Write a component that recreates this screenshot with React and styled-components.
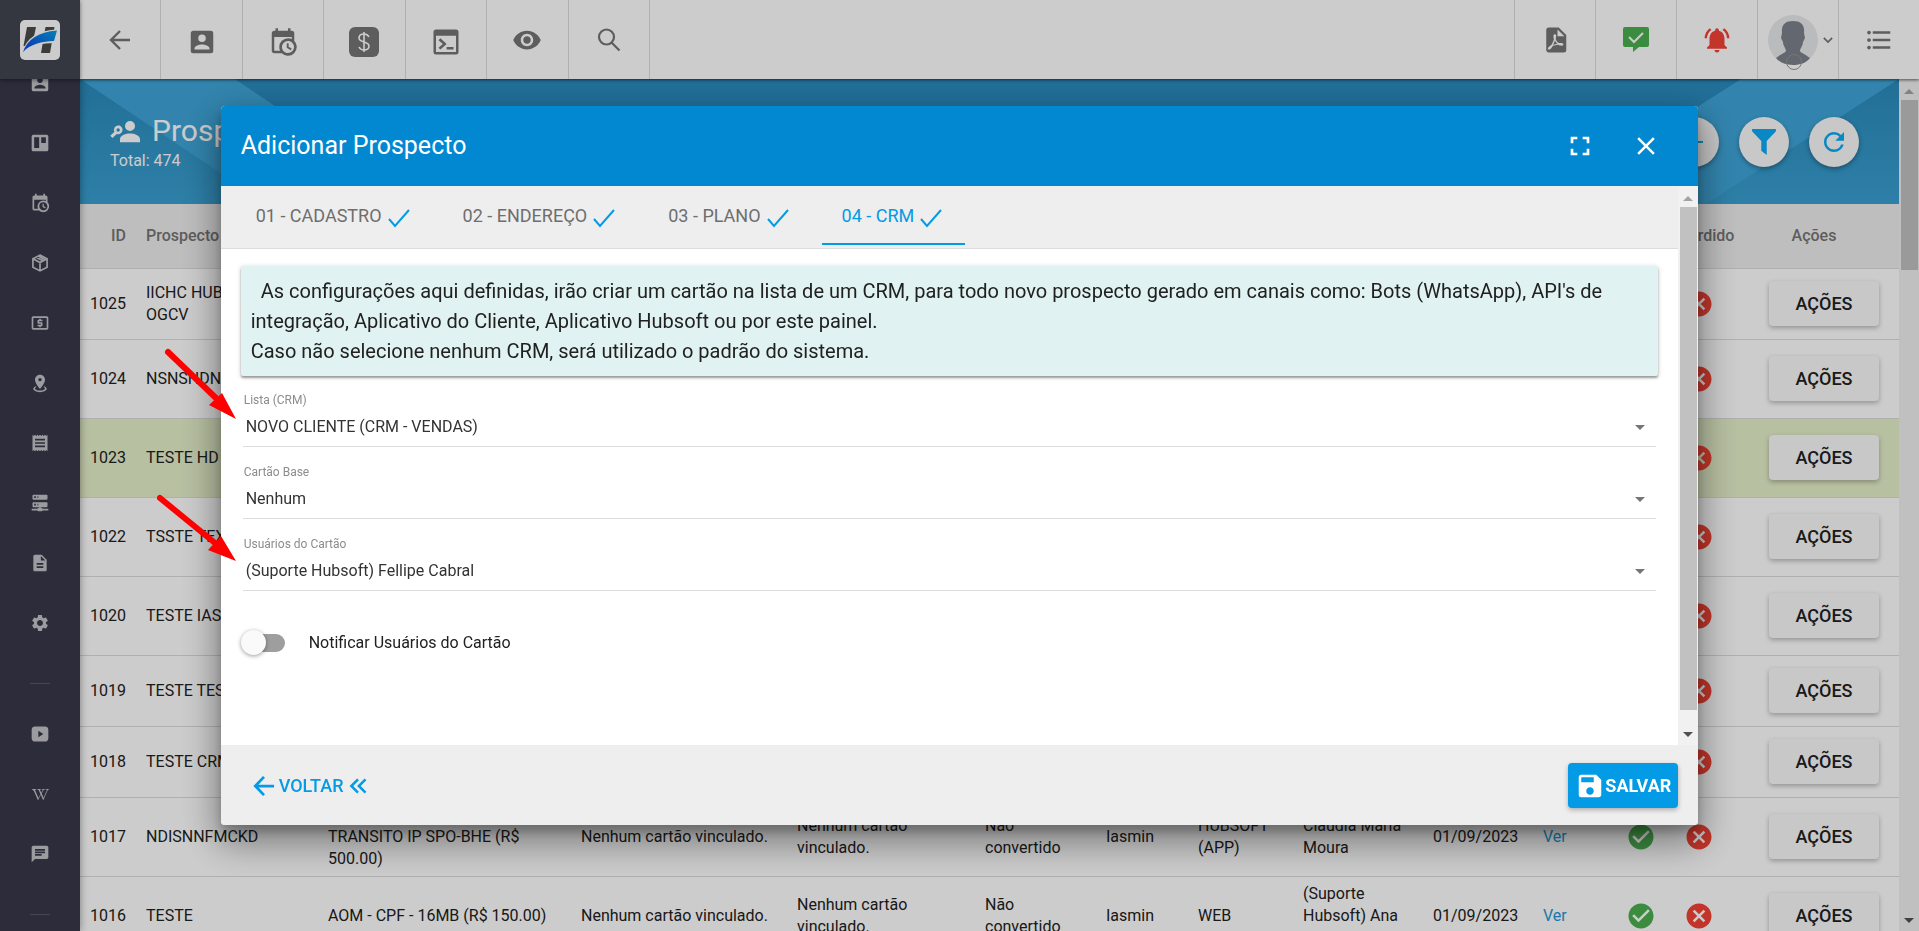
import React from 'react';
import styled, { createGlobalStyle, css } from 'styled-components';
import {
  MdCancel,
  MdChat,
  MdCheckCircle,
  MdClose,
  MdDescription,
  MdFormatListBulleted,
  MdFullscreen,
  MdLocalAtm,
  MdNotificationsActive,
  MdReceipt,
  MdRefresh,
  MdRemoveRedEye,
  MdSave,
  MdSettings,
} from 'react-icons/md';
import { FaWikipediaW } from 'react-icons/fa';

const GlobalStyle = createGlobalStyle`
  *, *::before, *::after {
    box-sizing: border-box;
  }

  body {
    margin: 0;
    overflow: hidden;
    font-family: Roboto, "Liberation Sans", sans-serif;
    font-size: 16px;
    line-height: 22px;
    color: #212121;
    background: #fff;
  }

  button, select, input {
    font: inherit;
    color: inherit;
  }

  button {
    border: 0;
    padding: 0;
    background: none;
    cursor: pointer;
  }

  svg {
    display: block;
    flex: none;
  }
`;

/* ---------- icons ---------- */

const paths = {
  accountBox:
    'M6,17C6,15 10,13.9 12,13.9C14,13.9 18,15 18,17V18H6M15,9A3,3 0 0,1 12,12A3,3 0 0,1 9,9A3,3 0 0,1 12,6A3,3 0 0,1 15,9M3,5V19A2,2 0 0,0 5,21H19A2,2 0 0,0 21,19V5A2,2 0 0,0 19,3H5C3.89,3 3,3.9 3,5Z',
  board:
    'M4,2H20A2,2 0 0,1 22,4V20A2,2 0 0,1 20,22H4A2,2 0 0,1 2,20V4A2,2 0 0,1 4,2M5,5V18H11V5M13.5,5V12H19V5Z',
  calendarClock:
    'M15,13H16.5V15.82L18.94,17.23L18.19,18.53L15,16.69V13M19,8H5V19H9.67C9.24,18.09 9,17.07 9,16A7,7 0 0,1 16,9C17.07,9 18.09,9.24 19,9.67V8M5,21C3.89,21 3,20.1 3,19V5C3,3.89 3.89,3 5,3H6V1H8V3H16V1H18V3H19A2,2 0 0,1 21,5V11.1C22.24,12.36 23,14.09 23,16A7,7 0 0,1 16,23C14.09,23 12.36,22.24 11.1,21H5M16,11.15A4.85,4.85 0 0,0 11.15,16C11.15,18.68 13.32,20.85 16,20.85A4.85,4.85 0 0,0 20.85,16C20.85,13.32 18.68,11.15 16,11.15Z',
  pin:
    'M12,2C15.31,2 18,4.66 18,7.95C18,12.41 12,19 12,19S6,12.41 6,7.95C6,4.66 8.69,2 12,2M12,6A2,2 0 0,0 10,8A2,2 0 0,0 12,10A2,2 0 0,0 14,8A2,2 0 0,0 12,6M20,19C20,21.21 16.42,23 12,23C7.58,23 4,21.21 4,19C4,17.71 5.22,16.56 7.11,15.83L7.75,16.74C6.67,17.19 6,17.81 6,18.5C6,19.88 8.69,21 12,21C15.31,21 18,19.88 18,18.5C18,17.81 17.33,17.19 16.25,16.74L16.89,15.83C18.78,16.56 20,17.71 20,19Z',
  server:
    'M13,18H14A1,1 0 0,1 15,19H22V21H15A1,1 0 0,1 14,22H10A1,1 0 0,1 9,21H2V19H9A1,1 0 0,1 10,18H11V17H4A1,1 0 0,1 3,16V12A1,1 0 0,1 4,11H20A1,1 0 0,1 21,12V16A1,1 0 0,1 20,17H13V18M4,2H20A1,1 0 0,1 21,3V7A1,1 0 0,1 20,8H4A1,1 0 0,1 3,7V3A1,1 0 0,1 4,2M9,6H10V4H9V6M9,15H10V13H9V15M5,4V6H7V4H5M5,13V15H7V13H5Z',
  play:
    'M7,3H17A4,4 0 0,1 22,7V17A4,4 0 0,1 17,21H7A4,4 0 0,1 2,17V7A4,4 0 0,1 7,3M10,8V16L16,12Z',
  pdf:
    'M14,9H19.5L14,3.5V9M7,2H15L21,8V20A2,2 0 0,1 19,22H7C5.89,22 5,21.1 5,20V4A2,2 0 0,1 7,2M11.93,12.44C12.34,13.34 12.86,14.08 13.46,14.59L13.87,14.91C13,15.07 11.8,15.35 10.53,15.84L10.42,15.88L10.92,14.84C11.37,13.97 11.7,13.18 11.93,12.44M18.41,16.25C18.59,16.07 18.68,15.84 18.69,15.59C18.72,15.39 18.67,15.2 18.57,15.04C18.28,14.57 17.53,14.35 16.29,14.35L15,14.42L14.13,13.84C13.5,13.32 12.93,12.41 12.53,11.28L12.57,11.14C12.9,9.81 13.21,8.2 12.55,7.54C12.39,7.38 12.17,7.3 11.94,7.3H11.7C11.33,7.3 11,7.69 10.91,8.07C10.54,9.4 10.76,10.13 11.13,11.34C10.88,12.23 10.56,13.25 10.05,14.28L9.09,16.08L8.2,16.57C7,17.32 6.43,18.16 6.32,18.69C6.28,18.88 6.3,19.05 6.37,19.23L6.4,19.28L6.88,19.59L7.32,19.7C8.13,19.7 9.05,18.75 10.29,16.63L10.47,16.56C11.5,16.23 12.78,16 14.5,15.81C15.53,16.32 16.74,16.55 17.5,16.55C17.94,16.55 18.24,16.44 18.41,16.25Z',
  console:
    'M4,2H20A2,2 0 0,1 22,4V20A2,2 0 0,1 20,22H4A2,2 0 0,1 2,20V4A2,2 0 0,1 4,2M4,7V20H20V7M6,10.5L7.5,9L12.5,13.5L7.5,18L6,16.5L9.5,13.5M12.5,16H18V18H12.5Z',
  filter: 'M1,0H23V2L14.5,11V24L9.5,20V11L1,2Z',
  accountKey:
    'M16,4A4,4 0 0,1 20,8A4,4 0 0,1 16,12A4,4 0 0,1 12,8A4,4 0 0,1 16,4M16,14C19.5,14 24,15.6 24,18.5V21H8V18.5C8,15.6 12.5,14 16,14M6.5,7.5A3.5,3.5 0 1,1 5.4,14.3L2,17.6L0.2,15.8L3.6,12.6A3.5,3.5 0 0,1 6.5,7.5M6.5,9.7A1.4,1.4 0 1,0 6.5,12.5A1.4,1.4 0 1,0 6.5,9.7Z',
};

const Glyph = ({ name, size }) => (
  <svg width={size} height={size} viewBox="0 0 24 24" aria-hidden="true">
    <path d={paths[name]} fill="currentColor" fillRule="evenodd" />
  </svg>
);

const Line = ({ d, size, weight = 2 }) => (
  <svg
    width={size}
    height={size}
    viewBox="0 0 24 24"
    fill="none"
    stroke="currentColor"
    strokeWidth={weight}
    aria-hidden="true"
  >
    <path d={d} />
  </svg>
);

const Logo = () => (
  <svg width="40" height="40" viewBox="0 0 40 40" aria-hidden="true">
    <rect width="40" height="40" rx="5" fill="#fff" />
    <path d="M7 7h9l-4 19H3.500zM25.500 7h9L30 33h-9z" fill="#4c4c4c" />
    <path d="M2 33C6 18 18 10 38 9.500L35 23C22 23 11 26 2 33z" fill="#fff" />
    <path d="M3 32C7 20 18 12 37 10.500L34 21C22 21.500 10 24 3 32z" fill="url(#swoosh)" />
    <defs>
      <linearGradient id="swoosh" x1="0" y1="1" x2="1" y2="0">
        <stop offset="0" stopColor="#0a3ee8" />
        <stop offset="1" stopColor="#0aa0e0" />
      </linearGradient>
    </defs>
  </svg>
);

const DollarBox = () => (
  <svg width="30" height="30" viewBox="0 0 30 30" fill="none" aria-hidden="true">
    <rect width="30" height="30" rx="6" fill="currentColor" />
    <path
      d="M20 10c-1-2-3-3-5-3-3 0-5 1-5 4 0 5 10 3 10 8 0 3-2 4-5 4-2 0-4-1-5-3M15 5v20"
      stroke="#fff"
      strokeWidth="1.6"
    />
  </svg>
);

const ChatCheck = () => (
  <svg width="26" height="26" viewBox="0 0 26 26" aria-hidden="true">
    <path d="M2 0h22a2 2 0 0 1 2 2v16a2 2 0 0 1-2 2h-8l-6 5v-5H2a2 2 0 0 1-2-2V2a2 2 0 0 1 2-2z" fill="#4caf50" />
    <path d="M6 10l5 5 9-9" stroke="#fff" strokeWidth="2" fill="none" />
  </svg>
);

const Package = () => (
  <Line size={20} d="M12 2.5L20.5 7v10L12 21.5 3.5 17V7zM3.5 7L12 11.5 20.5 7M12 11.5v10M7.5 5l8.5 4.500M10 3.500l8 4.500" />
);

/* ---------- shell ---------- */

const Shell = styled.div`
  display: grid;
  grid-template-columns: 80px minmax(0, 1fr);
  grid-template-rows: 79px minmax(0, 1fr);
  height: 100vh;
  overflow: hidden;
`;

const Brand = styled.a`
  display: flex;
  align-items: center;
  justify-content: center;
  background: #414551;
  box-shadow: 0 1px 4px rgba(0, 0, 0, 0.5);
  z-index: 3;
`;

const TopBar = styled.header`
  display: flex;
  justify-content: space-between;
  background: #fff;
  color: #757575;
  box-shadow: 0 1px 3px rgba(0, 0, 0, 0.6);
  z-index: 2;
`;

const BarGroup = styled.nav`
  display: grid;
  grid-auto-flow: column;
  grid-auto-columns: minmax(0, 1fr);
  width: ${({ $width }) => $width}px;
`;

const BarButton = styled.button`
  display: flex;
  align-items: center;
  justify-content: center;
  padding-top: ${({ $low }) => ($low ? 4 : 0)}px;
  color: ${({ $color }) => $color || 'inherit'};
  border-style: solid;
  border-color: #dcdcdc;
  border-width: ${({ $side }) => ($side === 'right' ? '0 0 0 1px' : '0 1px 0 0')};
`;

const ProfileButton = styled(BarButton)`
  gap: 5px;
  padding-left: 5px;
`;

const Avatar = styled.span`
  position: relative;
  display: block;
  width: 50px;
  height: 50px;

  &::after {
    content: '';
    position: absolute;
    left: 18px;
    bottom: -5px;
    width: 16px;
    height: 16px;
    border: 1px solid #96968a;
    border-radius: 50%;
  }
`;

const SideNav = styled.nav`
  overflow: hidden;
  background: #37384a;
  color: #c4c4c8;
  box-shadow: 0 0 8px rgba(0, 0, 0, 0.4);
  z-index: 1;
`;

const SideList = styled.div`
  display: flex;
  flex-direction: column;
  margin-top: -26px;
`;

const SideLink = styled.a`
  display: flex;
  align-items: center;
  justify-content: center;
  height: 60px;
  color: inherit;
  text-decoration: none;
`;

const SideDivider = styled.hr`
  width: 20px;
  margin: 30px auto 20px;
  border: 0;
  border-top: 1px solid #56586a;
`;

const Main = styled.main`
  display: flex;
  min-width: 0;
  overflow: hidden;
`;

const Page = styled.div`
  flex: 1;
  min-width: 0;
`;

const PageHead = styled.div`
  position: relative;
  display: flex;
  align-items: center;
  justify-content: space-between;
  height: 125px;
  padding: 0 40px 0 30px;
  color: #fff;
  background: #298dc1;
`;

const Facets = styled.svg`
  position: absolute;
  inset: 0;
  width: 100%;
  height: 100%;
`;

const PageTitle = styled.h1`
  display: flex;
  align-items: center;
  gap: 12px;
  margin: 0;
  font-size: 30px;
  line-height: 38px;
  font-weight: 400;
`;

const TitleBlock = styled.div`
  position: relative;
`;

const RoundActions = styled.div`
  position: relative;
  display: flex;
  gap: 20px;
`;

const RoundButton = styled.button`
  display: flex;
  align-items: center;
  justify-content: center;
  width: 50px;
  height: 50px;
  border-radius: 50%;
  background: #fafafa;
  color: #0aaaf5;
  box-shadow: 0 2px 5px rgba(0, 0, 0, 0.35);
`;

/* ---------- table ---------- */

const Table = styled.table`
  width: 100%;
  table-layout: fixed;
  border-collapse: collapse;
`;

const Th = styled.th`
  height: 64px;
  padding: 0 10px;
  text-align: ${({ $align }) => $align || 'left'};
  font-weight: 500;
  color: #757575;
  background: #eee;
  border-bottom: 1px solid #dcdcdc;
`;

const Tr = styled.tr`
  height: ${({ $tall }) => ($tall ? 79 : 71)}px;
  background: ${({ $active }) => ($active ? '#e6f0cb' : '#fff')};
  border-bottom: 1px solid #dcdcdc;
`;

const Td = styled.td`
  padding: 0 10px;
  white-space: pre-line;

  a {
    color: #2196d8;
    text-decoration: none;
  }

  svg {
    margin: 0 auto;
  }
`;

const ActionTd = styled(Td)`
  padding-right: 20px;
`;

const RowButton = styled.button`
  display: block;
  width: 110px;
  height: 45px;
  margin-left: auto;
  border-radius: 4px;
  font-size: 18px;
  font-weight: 500;
  background: #fafafa;
  box-shadow: 0 2px 5px rgba(0, 0, 0, 0.28);
`;

/* ---------- scrollbar ---------- */

const Track = styled.div`
  display: flex;
  flex: none;
  flex-direction: column;
  align-items: center;
  width: 20px;
  padding: 10px 0 8px;
  gap: 6px;
  background: #f1f1f1;
`;

const Thumb = styled.div`
  flex: 0 0 ${({ $size }) => $size};
  width: 17px;
  background: #c1c1c1;
`;

const Caret = styled.span`
  width: 0;
  height: 0;
  border: 5px solid transparent;
  ${({ $up }) =>
    $up
      ? css`
          border-top: 0;
          border-bottom-color: #a3a3a3;
        `
      : css`
          margin-top: auto;
          border-bottom: 0;
          border-top-color: #505050;
        `}
`;

const ScrollRail = ({ size }) => (
  <Track aria-hidden="true">
    <Caret $up />
    <Thumb $size={size} />
    <Caret />
  </Track>
);

/* ---------- dialog ---------- */

const Backdrop = styled.div`
  position: fixed;
  inset: 0;
  display: flex;
  align-items: center;
  justify-content: center;
  background: rgba(0, 0, 0, 0.2);
  z-index: 10;
`;

const Dialog = styled.section`
  width: 77%;
  border-radius: 4px;
  background: #fff;
  box-shadow: 0 7px 9px rgba(0, 0, 0, 0.2), 0 14px 36px 4px rgba(0, 0, 0, 0.4);
`;

const DialogHead = styled.header`
  display: flex;
  align-items: center;
  height: 80px;
  padding: 0 37px 0 20px;
  border-radius: 4px 4px 0 0;
  background: #0288d1;
  color: #fff;
`;

const DialogTitle = styled.h2`
  flex: 1;
  margin: 0;
  font-size: 25px;
  line-height: 30px;
  font-weight: 400;
`;

const HeadButton = styled.button`
  display: flex;
  margin-left: 35px;
`;

const DialogBody = styled.div`
  display: flex;
  height: 60vh;
`;

const Content = styled.div`
  flex: 1;
  min-width: 0;
`;

const Tabs = styled.div`
  display: flex;
  gap: 10px;
  height: 63px;
  padding: 0 15px;
  background: #eee;
  border-bottom: 1px solid #dcdcdc;
`;

const Tab = styled.button`
  display: flex;
  align-items: center;
  gap: 5px;
  height: 59px;
  padding: 2px 22px 0 20px;
  color: ${({ $active }) => ($active ? '#039be5' : '#6e6e6e')};
  border-bottom: 2px solid ${({ $active }) => ($active ? '#039be5' : 'transparent')};
  font-size: 18px;

  svg {
    color: #039be5;
    margin-top: 4px;
  }
`;

const Form = styled.form`
  padding: 17px 20px 0;
`;

const Notice = styled.p`
  margin: 0 0 16px;
  padding: 10px;
  border-radius: 2px;
  background: #e0f2f1;
  font-size: 20px;
  line-height: 30px;
  text-indent: 10px;
  box-shadow: 0 1px 5px rgba(0, 0, 0, 0.2), 0 2px 2px rgba(0, 0, 0, 0.3);
`;

const Field = styled.div`
  position: relative;
  display: flex;
  flex-direction: column;
  height: 72px;
  margin: 0 2px;

  label {
    font-size: 12px;
    line-height: 16px;
    padding-left: 1px;
    color: #8c8c8c;
  }
`;

const SelectBox = styled.div`
  display: flex;
  align-items: center;
  height: 39px;
  padding-right: 11px;
  border-bottom: 1px solid #dedede;
  color: #757575;

  select {
    flex: 1;
    height: 36px;
    padding: 0 3px;
    border: 0;
    outline: 0;
    appearance: none;
    background: none;
    color: #333;
  }
`;

const Pointer = styled.svg`
  position: absolute;
  top: ${({ $top }) => $top}px;
  left: -86px;
  z-index: 1;
  pointer-events: none;
`;

const SwitchRow = styled.label`
  display: inline-flex;
  align-items: center;
  gap: 24px;
  margin-top: 22px;
`;

const Switch = styled.input`
  position: relative;
  appearance: none;
  width: 44px;
  height: 25px;
  margin: 0;
  border-radius: 13px;
  cursor: pointer;

  &::before {
    content: '';
    position: absolute;
    left: 4px;
    top: 4px;
    width: 40px;
    height: 18px;
    border-radius: 9px;
    background: #9e9e9e;
  }

  &::after {
    content: '';
    position: absolute;
    left: 0;
    top: 0;
    width: 25px;
    height: 25px;
    border-radius: 50%;
    background: #fafafa;
    box-shadow: 0 1px 4px rgba(0, 0, 0, 0.4);
  }

  &:checked::after {
    left: 19px;
  }
`;

const DialogFoot = styled.footer`
  display: flex;
  align-items: center;
  justify-content: space-between;
  height: 80px;
  padding: 2px 20px 0 32px;
  border-radius: 0 0 4px 4px;
  background: #eee;
`;

const BackButton = styled.button`
  display: flex;
  align-items: center;
  gap: 4px;
  font-size: 18px;
  font-weight: 500;
  color: #039be5;
`;

const SaveButton = styled.button`
  display: flex;
  align-items: center;
  justify-content: center;
  width: 110px;
  height: 45px;
  border-radius: 4px;
  font-size: 18px;
  font-weight: 700;
  color: #fff;
  background: #039be5;
  box-shadow: 0 2px 5px rgba(0, 0, 0, 0.28);
`;

/* ---------- data ---------- */

const sideItems = [
  ['Clientes', <Glyph name="accountBox" size={22} />],
  ['Quadros', <Glyph name="board" size={20} />],
  ['Agenda', <Glyph name="calendarClock" size={20} />],
  ['Estoque', <Package />],
  ['Financeiro', <MdLocalAtm size={20} />],
  ['Mapa', <Glyph name="pin" size={20} />],
  ['Fiscal', <MdReceipt size={20} />],
  ['Rede', <Glyph name="server" size={20} />],
  ['Relatórios', <MdDescription size={20} />],
  ['Configurações', <MdSettings size={20} />],
];

const helpItems = [
  ['Vídeos', <Glyph name="play" size={20} />],
  ['Wiki', <FaWikipediaW size={17} />],
  ['Chat', <MdChat size={20} />],
];

const columns = [
  ['ID', 56, 'right'],
  ['Prospecto', 182],
  ['Plano', 253],
  ['Cartão', 216],
  ['Lista', 188],
  ['Situação', 121],
  ['Vendedor', 92],
  ['Origem', 105],
  ['Usuário', 130],
  ['Data', 110],
  ['Detalhes', 80],
  ['Ganho', 56],
  ['Perdido', 60],
  ['Ações', 170, 'center'],
];

const base = {
  plan: 'AOM - CPF - 16MB (R$ 150.00)',
  origin: 'WEB',
  user: '(Suporte Hubsoft) Ana',
};

const prospects = [
  { ...base, id: 1025, name: 'IICHC HUBSOFT\nOGCV' },
  { ...base, id: 1024, name: 'NSNSHDN', tall: true },
  { ...base, id: 1023, name: 'TESTE HD', tall: true, active: true },
  { ...base, id: 1022, name: 'TSSTE TEXT', tall: true },
  { ...base, id: 1020, name: 'TESTE IASMIN', tall: true },
  { ...base, id: 1019, name: 'TESTE TESTE' },
  { ...base, id: 1018, name: 'TESTE CRM' },
  {
    id: 1017,
    name: 'NDISNNFMCKD',
    plan: 'LINK DEDICADO\nTRANSITO IP SPO-BHE (R$ 500.00)',
    origin: 'HUBSOFT (APP)',
    user: 'Claudia Maria Moura',
    tall: true,
  },
  { ...base, id: 1016, name: 'TESTE', user: '(Suporte Hubsoft) Ana Paula', tall: true },
];

const fields = [
  { id: 'lista', label: 'Lista (CRM)', value: 'NOVO CLIENTE (CRM - VENDAS)', arrow: 'list' },
  { id: 'base', label: 'Cartão Base', value: 'Nenhum' },
  { id: 'usuarios', label: 'Usuários do Cartão', value: '(Suporte Hubsoft) Fellipe Cabral', arrow: 'user' },
];

const arrows = {
  list: { top: -46, line: 'M11 6L60 53', head: '79,73 52,59 65,47' },
  user: { top: -44, line: 'M3 6L58 51', head: '79,69 51,58 64,44' },
};

/* ---------- app ---------- */

const Header = () => (
  <TopBar>
    <BarGroup $width={570} aria-label="Atalhos">
      <BarButton aria-label="Voltar"><Line size={24} weight={2.4} d="M22 12H3M12 3l-9 9 9 9" /></BarButton>
      <BarButton $low aria-label="Clientes"><Glyph name="accountBox" size={30} /></BarButton>
      <BarButton $low aria-label="Agenda"><Glyph name="calendarClock" size={30} /></BarButton>
      <BarButton $low aria-label="Financeiro"><DollarBox /></BarButton>
      <BarButton $low aria-label="Console"><Glyph name="console" size={30} /></BarButton>
      <BarButton aria-label="Visualizar"><MdRemoveRedEye size={30} /></BarButton>
      <BarButton aria-label="Pesquisar">
        <Line size={24} weight={2.2} d="M17 9a7.500 7.500 0 1 1-15 0a7.500 7.500 0 1 1 15 0zM14.500 14.500l8 8" />
      </BarButton>
    </BarGroup>
    <BarGroup $width={405} aria-label="Conta">
      <BarButton $side="right" aria-label="PDF"><Glyph name="pdf" size={30} /></BarButton>
      <BarButton $side="right" aria-label="Mensagens"><ChatCheck /></BarButton>
      <BarButton $side="right" $color="#f44336" aria-label="Notificações">
        <MdNotificationsActive size={30} />
      </BarButton>
      <ProfileButton $side="right" aria-label="Perfil">
        <Avatar>
          <svg width="50" height="50" viewBox="0 0 50 50" aria-hidden="true">
            <circle cx="25" cy="25" r="25" fill="#e9eaed" />
            <path
              d="M14 18C13 10 17 6 25 6s12 4 11 12l1 5-2 4c0 4-3 6-3 9 1 2 5 3 10 7C38 48 32 50 25 50S12 48 8 43c5-4 9-5 10-7 0-3-3-5-3-9l-2-4z"
              fill="#7c828d"
            />
          </svg>
        </Avatar>
        <Line size={10} d="M2 7l10 10L22 7" weight={4} />
      </ProfileButton>
      <BarButton $side="right" aria-label="Menu"><MdFormatListBulleted size={30} /></BarButton>
    </BarGroup>
  </TopBar>
);

const SideMenu = () => (
  <SideNav aria-label="Menu principal">
    <SideList>
      {sideItems.map(([label, icon]) => (
        <SideLink key={label} href="#" aria-label={label}>{icon}</SideLink>
      ))}
      <SideDivider />
      {helpItems.map(([label, icon]) => (
        <SideLink key={label} href="#" aria-label={label}>{icon}</SideLink>
      ))}
      <SideDivider />
    </SideList>
  </SideNav>
);

const ProspectRow = ({ item }) => (
  <Tr $tall={item.tall} $active={item.active}>
    <Td>{item.id}</Td>
    <Td>{item.name}</Td>
    <Td>{item.plan}</Td>
    <Td>Nenhum cartão vinculado.</Td>
    <Td>Nenhum cartão<br />vinculado.</Td>
    <Td>Não convertido</Td>
    <Td>Iasmin</Td>
    <Td>{item.origin}</Td>
    <Td>{item.user}</Td>
    <Td>01/09/2023</Td>
    <Td><a href="#">Ver</a></Td>
    <Td><MdCheckCircle size={30} color="#4caf50" /></Td>
    <Td><MdCancel size={30} color="#f44336" /></Td>
    <ActionTd><RowButton>AÇÕES</RowButton></ActionTd>
  </Tr>
);

const ProspectPage = () => (
  <Main>
    <Page>
      <PageHead>
        <Facets viewBox="0 0 1819 125" preserveAspectRatio="none" aria-hidden="true">
          <defs>
            <linearGradient id="facet" x1="0" y1="0" x2="0" y2="1">
              <stop offset="0" stopColor="#2a8bbd" />
              <stop offset="1" stopColor="#3aa0d2" />
            </linearGradient>
          </defs>
          <rect width="1819" height="125" fill="url(#facet)" />
          <path d="M0 0h155l187 125H187z" fill="#3fa6da" />
          <path d="M155 0h1506L1466 125H342z" fill="#2a8bbf" />
          <path d="M1661 0h158L1626 125H1466z" fill="#3fa6da" />
        </Facets>
        <TitleBlock>
          <PageTitle><Glyph name="accountKey" size={30} />Prospectos</PageTitle>
          <div>Total: 474</div>
        </TitleBlock>
        <RoundActions>
          <RoundButton aria-label="Adicionar"><Line size={24} d="M12 3v18M3 12h18" /></RoundButton>
          <RoundButton aria-label="Filtrar"><Glyph name="filter" size={26} /></RoundButton>
          <RoundButton aria-label="Atualizar"><MdRefresh size={30} /></RoundButton>
        </RoundActions>
      </PageHead>
      <Table>
        <colgroup>
          {columns.map(([name, width]) => <col key={name} style={{ width }} />)}
        </colgroup>
        <thead>
          <tr>
            {columns.map(([name, , align]) => <Th key={name} $align={align}>{name}</Th>)}
          </tr>
        </thead>
        <tbody>
          {prospects.map(item => <ProspectRow key={item.id} item={item} />)}
        </tbody>
      </Table>
    </Page>
    <ScrollRail size="170px" />
  </Main>
);

const SelectField = ({ field }) => {
  const arrow = arrows[field.arrow];

  return (
    <Field>
      <label htmlFor={field.id}>{field.label}</label>
      <SelectBox>
        <select id={field.id} defaultValue={field.value}>
          <option>{field.value}</option>
        </select>
        <svg width="10" height="5" viewBox="0 0 10 5" aria-hidden="true">
          <path d="M0 0h10L5 5z" fill="currentColor" />
        </svg>
      </SelectBox>
      {arrow && (
        <Pointer $top={arrow.top} width="84" height="80" viewBox="0 0 84 80" aria-hidden="true">
          <path d={arrow.line} stroke="#f00" strokeWidth="6" strokeLinecap="round" />
          <polygon points={arrow.head} fill="#f00" />
        </Pointer>
      )}
    </Field>
  );
};

const steps = ['01 - CADASTRO', '02 - ENDEREÇO', '03 - PLANO', '04 - CRM'];

const ProspectDialog = () => (
  <Backdrop>
    <Dialog role="dialog" aria-labelledby="dialog-title">
      <DialogHead>
        <DialogTitle id="dialog-title">Adicionar Prospecto</DialogTitle>
        <HeadButton aria-label="Tela cheia"><MdFullscreen size={32} /></HeadButton>
        <HeadButton aria-label="Fechar"><MdClose size={30} /></HeadButton>
      </DialogHead>
      <DialogBody>
        <Content>
          <Tabs role="tablist">
            {steps.map((step, i) => (
              <Tab key={step} role="tab" aria-selected={i === 3} $active={i === 3}>
                {step}
                <Line size={24} d="M2 13l6 7L22 4" />
              </Tab>
            ))}
          </Tabs>
          <Form>
            <Notice>
              As configurações aqui definidas, irão criar um cartão na lista de um CRM, para todo novo
              prospecto gerado em canais como: Bots (WhatsApp), API's de integração, Aplicativo do
              Cliente, Aplicativo Hubsoft ou por este painel.
              <br />
              Caso não selecione nenhum CRM, será utilizado o padrão do sistema.
            </Notice>
            {fields.map(field => <SelectField key={field.id} field={field} />)}
            <SwitchRow>
              <Switch type="checkbox" role="switch" />
              Notificar Usuários do Cartão
            </SwitchRow>
          </Form>
        </Content>
        <ScrollRail size="503px" />
      </DialogBody>
      <DialogFoot>
        <BackButton>
          <Line size={22} d="M23 12H3M12 2L2.500 12l9.500 10" weight={3} />
          VOLTAR
          <Line size={20} d="M12 4l-8 8 8 8M21 4l-8 8 8 8" weight={3} />
        </BackButton>
        <SaveButton><MdSave size={30} />SALVAR</SaveButton>
      </DialogFoot>
    </Dialog>
  </Backdrop>
);

const App = () => (
  <>
    <GlobalStyle />
    <Shell>
      <Brand href="#" aria-label="Hubsoft"><Logo /></Brand>
      <Header />
      <SideMenu />
      <ProspectPage />
    </Shell>
    <ProspectDialog />
  </>
);

export default App;
